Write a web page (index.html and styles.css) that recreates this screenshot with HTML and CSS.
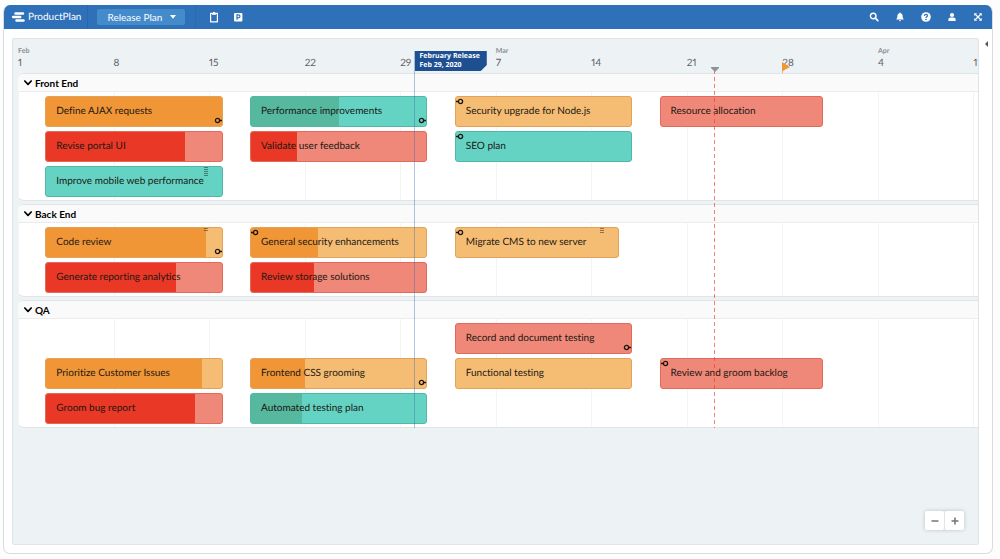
FILE: index.html
```html
<!DOCTYPE html>
<html lang="en">
<head>
<meta charset="utf-8">
<title>ProductPlan – Release Plan</title>
<link rel="stylesheet" href="styles.css">
</head>
<body>
<svg class="sprite" aria-hidden="true">
  <symbol id="link-out" viewBox="0 0 8 7"><circle cx="3.5" cy="3.5" r="2.100" fill="none" stroke="currentColor" stroke-width="1.300"/><path d="M5.600 3.500H8" stroke="currentColor" stroke-width="1.300"/></symbol>
  <symbol id="link-in" viewBox="0 0 8 7"><circle cx="4.5" cy="3.5" r="2.100" fill="none" stroke="currentColor" stroke-width="1.300"/><path d="M0 3.500h2.400" stroke="currentColor" stroke-width="1.300"/></symbol>
  <symbol id="chevron" viewBox="0 0 8 6"><path d="M0.8 1 4 4.4 7.2 1" fill="none" stroke="currentColor" stroke-width="1.7" stroke-linecap="round" stroke-linejoin="round"/></symbol>
</svg>
<div class="app">
  <header class="topbar">
    <a class="brand" href="#">
      <svg class="brand-mark" viewBox="0 0 13 10" aria-hidden="true"><path d="M3.500 1.500h7.500M1.200 5h7M4.500 8.500h7" stroke="#fff" stroke-width="2.500" stroke-linecap="round"/></svg>
      <span>ProductPlan</span>
    </a>
    <div class="plan">
      <div class="plan-picker">
        <select class="plan-select" aria-label="Roadmap"><option>Release Plan</option></select>
        <svg class="plan-caret" viewBox="0 0 6 4" aria-hidden="true"><path d="M0 0h6L3 3.8z" fill="#fff"/></svg>
      </div>
    </div>
    <nav class="tools" aria-label="Boards">
      <button class="icon-btn" aria-label="Table layout"><svg viewBox="0 0 12 12"><path d="M4 2.4H2.6v8.4h6.8V2.4H8" fill="none" stroke="#fff" stroke-width="1.2" stroke-linejoin="round"/><path d="M4 1.8h1a1 1 0 0 1 2 0h1v1.9H4z" fill="#fff"/></svg></button>
      <button class="icon-btn" aria-label="Parking lot"><svg viewBox="0 0 12 12"><rect x="2" y="2" width="8.4" height="8.4" rx="1" fill="#fff"/><path d="M5 8.8V3.9h1.5a1.4 1.4 0 0 1 0 2.900H5" fill="none" stroke="#2e71b9" stroke-width="1.2"/></svg></button>
    </nav>
    <nav class="account" aria-label="Account">
      <button class="icon-btn" aria-label="Search"><svg viewBox="0 0 12 12"><circle cx="5.2" cy="5" r="2.8" fill="none" stroke="#fff" stroke-width="1.4"/><path d="m7.4 7.2 2.4 2.5" stroke="#fff" stroke-width="1.7" stroke-linecap="round"/></svg></button>
      <button class="icon-btn" aria-label="Notifications"><svg viewBox="0 0 12 12"><path d="M6 1.4c.5 0 .7.3.7.8C8 2.600 8.600 3.700 8.600 5c0 1.700.5 2.400 1 3v.6H2.400V8c.5-.6 1-1.300 1-3 0-1.300.6-2.400 1.900-2.800 0-.5.2-.8.7-.8zM4.900 9.200h2.200a1.100 1.100 0 0 1-2.200 0z" fill="#fff"/></svg></button>
      <button class="icon-btn" aria-label="Help"><svg viewBox="0 0 12 12"><circle cx="6" cy="6" r="4.800" fill="#fff"/><path d="M4.500 4.900c0-1 .7-1.500 1.500-1.500s1.500.5 1.500 1.300c0 1-1.500 1-1.500 2.200" fill="none" stroke="#2e71b9" stroke-width="1.200"/><circle cx="6" cy="8.500" r=".8" fill="#2e71b9"/></svg></button>
      <button class="icon-btn" aria-label="Profile"><svg viewBox="0 0 12 12"><circle cx="6" cy="4" r="2.100" fill="#fff"/><path d="M2.400 9.900V8.600c0-1.300 1-2 2.100-2h3c1.100 0 2.100.7 2.100 2v1.300z" fill="#fff"/></svg></button>
      <button class="icon-btn" aria-label="Full screen"><svg viewBox="0 0 12 12"><path d="m3.500 3.500 5 5m0-5-5 5" stroke="#fff" stroke-width="1.200"/><path d="M2.200 2.200h2.900L2.200 5.100zM9.800 2.200v2.900L6.900 2.200zM2.200 9.800V6.900l2.900 2.900zM9.800 9.800H6.900l2.900-2.900z" fill="#fff"/></svg></button>
    </nav>
  </header>

  <div class="workspace">
    <main class="board">
      <div class="timeline">
        <div class="scale track">
          <div class="tick c0"><span class="month">Feb</span><span class="day">1</span></div>
          <div class="tick c1"><span class="day">8</span></div>
          <div class="tick c2"><span class="day">15</span></div>
          <div class="tick c3"><span class="day">22</span></div>
          <div class="tick c4"><span class="day">29</span></div>
          <div class="tick c5"><span class="month">Mar</span><span class="day">7</span></div>
          <div class="tick c6"><span class="day">14</span></div>
          <div class="tick c7"><span class="day">21</span></div>
          <div class="tick c8"><span class="day">28</span></div>
          <div class="tick c9"><span class="month">Apr</span><span class="day">4</span></div>
          <div class="tick c10"><span class="day">11</span></div>
        </div>

        <div class="lanes">
          <section class="lane">
            <h2 class="lane-head"><button class="lane-toggle" aria-expanded="true"><svg class="chev"><use href="#chevron"/></svg>Front End</button></h2>
            <div class="track rows">
              <article class="bar s1 r1 amber"><i class="done" style="width:100%"></i><span class="name">Define AJAX requests</span><svg class="out"><use href="#link-out"/></svg></article>
              <article class="bar s1 r2 red"><i class="done" style="width:79%"></i><span class="name">Revise portal UI</span></article>
              <article class="bar s1 r3 teal"><span class="name">Improve mobile web performance</span><i class="grip grip-lg"></i></article>
              <article class="bar s2 r1 teal"><i class="done" style="width:50%"></i><span class="name">Performance improvements</span><svg class="out"><use href="#link-out"/></svg></article>
              <article class="bar s2 r2 red"><i class="done" style="width:26%"></i><span class="name">Validate user feedback</span></article>
              <article class="bar s3 r1 amber"><span class="name">Security upgrade for Node.js</span><svg class="in"><use href="#link-in"/></svg></article>
              <article class="bar s3 r2 teal"><span class="name">SEO plan</span><svg class="in"><use href="#link-in"/></svg></article>
              <article class="bar s4 r1 red"><span class="name">Resource allocation</span></article>
            </div>
          </section>

          <section class="lane">
            <h2 class="lane-head"><button class="lane-toggle" aria-expanded="true"><svg class="chev"><use href="#chevron"/></svg>Back End</button></h2>
            <div class="track rows">
              <article class="bar s1 r1 amber"><i class="done" style="width:91%"></i><span class="name">Code review</span><i class="grip grip-sm"></i><svg class="out"><use href="#link-out"/></svg></article>
              <article class="bar s1 r2 red"><i class="done" style="width:74%"></i><span class="name">Generate reporting analytics</span></article>
              <article class="bar s2 r1 amber"><i class="done" style="width:38%"></i><span class="name">General security enhancements</span><svg class="in"><use href="#link-in"/></svg></article>
              <article class="bar s2 r2 red"><i class="done" style="width:36%"></i><span class="name">Review storage solutions</span></article>
              <article class="bar s3 short r1 amber"><span class="name">Migrate CMS to new server</span><i class="grip grip-md"></i><svg class="in"><use href="#link-in"/></svg></article>
            </div>
          </section>

          <section class="lane">
            <h2 class="lane-head"><button class="lane-toggle" aria-expanded="true"><svg class="chev"><use href="#chevron"/></svg>QA</button></h2>
            <div class="track rows">
              <article class="bar s3 r1 red"><span class="name">Record and document testing</span><svg class="out"><use href="#link-out"/></svg></article>
              <article class="bar s1 r2 amber"><i class="done" style="width:89%"></i><span class="name">Prioritize Customer Issues</span></article>
              <article class="bar s1 r3 red"><i class="done" style="width:85%"></i><span class="name">Groom bug report</span></article>
              <article class="bar s2 r2 amber"><i class="done" style="width:31%"></i><span class="name">Frontend CSS grooming</span><svg class="out"><use href="#link-out"/></svg></article>
              <article class="bar s2 r3 teal"><i class="done" style="width:29%"></i><span class="name">Automated testing plan</span></article>
              <article class="bar s3 r2 amber"><span class="name">Functional testing</span></article>
              <article class="bar s4 r2 red"><span class="name">Review and groom backlog</span><svg class="in"><use href="#link-in"/></svg></article>
            </div>
          </section>
        </div>

        <div class="milestone" style="left:41.2%"><div class="milestone-flag">February Release<br>Feb 29, 2020</div></div>
        <div class="today" style="left:72.5%"><svg class="today-mark" viewBox="0 0 8 5" aria-hidden="true"><path d="M0 0h8v1L4 5 0 1z" fill="#8e9398"/></svg></div>
        <svg class="flag" style="left:79.6%" viewBox="0 0 8 11" aria-hidden="true"><path d="M0 0l8 5-7.300 4V11H0z" fill="#f09637"/></svg>
      </div>

      <div class="zoom">
        <button class="zoom-btn" aria-label="Zoom out"><svg viewBox="0 0 8 8"><path d="M.5 4h7" stroke="#73777b" stroke-width="1.600"/></svg></button>
        <button class="zoom-btn" aria-label="Zoom in"><svg viewBox="0 0 8 8"><path d="M.5 4h7M4 .5v7" stroke="#73777b" stroke-width="1.600"/></svg></button>
      </div>
    </main>
    <button class="drawer" aria-label="Open side panel"><svg viewBox="0 0 3 6"><path d="M3 0v6L0 3z" fill="#55595d"/></svg></button>
  </div>
</div>
</body>
</html>
```
FILE: styles.css
```css
* { box-sizing: border-box; }

body {
  margin: 0;
  min-height: 100vh;
  padding: 5px 7px 5px 3px;
  display: flex;
  background: #fdfdfd;
  color: #1b1b1b;
  font: 10px/12px Lato, "Noto Sans", sans-serif;
  font-variant-ligatures: none;
  text-rendering: geometricPrecision;
}

button {
  margin: 0;
  padding: 0;
  border: 0;
  background: none;
  color: inherit;
  font: inherit;
}

svg { display: block; }
.sprite { position: absolute; width: 0; height: 0; }

.app {
  flex: 1;
  min-width: 0;
  display: flex;
  flex-direction: column;
  border: 1px solid #d9dcdf;
  border-top: 0;
  border-radius: 7px;
  background: #fff;
  overflow: hidden;
}

/* top bar */
.topbar {
  display: flex;
  align-items: stretch;
  height: 24px;
  background: #2e71b9;
  color: #fff;
}
.brand {
  display: flex;
  align-items: center;
  gap: 3px;
  padding: 0 6px 0 8px;
  border-right: 1px solid #2767ad;
  color: #fff;
  text-decoration: none;
}
.brand-mark { width: 13px; height: 10px; }
.plan {
  display: flex;
  align-items: center;
  padding: 0 10px 0 9px;
  border-right: 1px solid #2a6ab0;
}
.plan-picker { position: relative; }
.plan-select {
  appearance: none;
  width: 88px;
  height: 16px;
  padding: 0 20px 0 10px;
  border: 0;
  border-radius: 2px;
  background: #448bcb;
  color: #fff;
  font: inherit;
}
.plan-caret {
  position: absolute;
  right: 9px;
  top: 6px;
  width: 6px;
  height: 4px;
  pointer-events: none;
}
.tools, .account { display: flex; align-items: center; }
.tools { gap: 12px; padding-left: 12px; }
.account { gap: 14px; margin-left: auto; padding-right: 8px; }
.icon-btn, .icon-btn svg { width: 12px; height: 12px; }

/* workspace */
.workspace {
  flex: 1;
  display: flex;
  align-items: stretch;
  padding: 9px 0 8px 8px;
}
.board {
  position: relative;
  flex: 1;
  min-width: 0;
  padding-left: 5px;
  border: 1px solid #dfe4e7;
  border-radius: 2px;
  background: #edf2f5;
  overflow: hidden;
}
.drawer { align-self: flex-start; width: 13px; padding: 3px 0 0 6px; }
.drawer svg { width: 3px; height: 6px; }

/* timeline: three columns per day, 21 per week */
.timeline { position: relative; }
.track {
  display: grid;
  grid-template-columns: repeat(211, minmax(0, 1fr));
}
.scale { height: 34px; padding-top: 7px; }
.tick {
  grid-row: 1;
  display: flex;
  flex-direction: column;
  justify-content: flex-end;
  white-space: nowrap;
  height: 24px;
}
.c0 { grid-column: 1; }
.c1 { grid-column: 22; }
.c2 { grid-column: 43; }
.c3 { grid-column: 64; }
.c4 { grid-column: 85; }
.c5 { grid-column: 106; }
.c6 { grid-column: 127; }
.c7 { grid-column: 148; }
.c8 { grid-column: 169; }
.c9 { grid-column: 190; }
.c10 { grid-column: 211; }
.month { color: #8b9094; font-size: 7px; line-height: 10px; font-weight: 700; }
.day { color: #5d6165; font-size: 10px; line-height: 14px; font-variant-numeric: proportional-nums; }

.lanes { display: flex; flex-direction: column; gap: 3px; }
.lane {
  border: 1px solid #e0e4e7;
  border-right: 0;
  border-left-width: 0;
  border-radius: 6px 0 0 6px;
  background: #fff;
  overflow: hidden;
}
.lane-head {
  margin: 0;
  height: 18px;
  border-bottom: 1px solid #eaecee;
  background: #fafafa;
  font-size: 10px;
  line-height: 17px;
}
.lane-toggle { display: flex; align-items: center; gap: 3px; height: 17px; padding: 1px 0 0 6px; color: #000; font-weight: 700; }
.chev { width: 8px; height: 6px; }

.rows {
  grid-auto-rows: 31px;
  row-gap: 4px;
  padding: 4px 0 3px;
  background: repeating-linear-gradient(to right, #f2f4f5 0 1px, transparent 1px calc(100% * 21 / 211));
}
.bar {
  position: relative;
  display: flex;
  align-items: center;
  padding: 0 10px 2px;
  border: 1px solid;
  border-radius: 3px;
  overflow: hidden;
  color: #1c1713;
}
.s1 { grid-column: 7 / 46; }
.s2 { grid-column: 52 / 91; }
.s3 { grid-column: 97 / 136; }
.s3.short { grid-column: 97 / 133; }
.s4 { grid-column: 142 / 178; }
.r1 { grid-row: 1; }
.r2 { grid-row: 2; }
.r3 { grid-row: 3; }
.amber { background: #f5bd74; border-color: #e2a257; --done: #f09637; }
.red { background: #ef8878; border-color: #e26a5b; --done: #ea3826; }
.teal { background: #65d3c3; border-color: #50b9a4; --done: #55b89f; }
.done { position: absolute; inset: 0 auto 0 0; background: var(--done); }
.name { position: relative; white-space: nowrap; }
.out, .in { position: absolute; width: 8px; height: 7px; color: #1c1713; }
.out { right: 0; bottom: 2px; }
.in { left: 0; top: 1px; }
.grip {
  position: absolute;
  top: 0;
  right: 14px;
  width: 4px;
  background: repeating-linear-gradient(#0006 0 1px, transparent 1px 2px);
}
.grip-lg { height: 9px; }
.grip-md { height: 5px; }
.grip-sm { height: 3px; }

/* markers over the timeline */
.milestone {
  position: absolute;
  top: 12px;
  bottom: 0;
  border-left: 1px solid #3a6ca866;
  pointer-events: none;
}
.milestone-flag {
  padding: 1px 7px 1px 5px;
  background: #1d4f91;
  color: #fff;
  font-family: "Open Sans", "Noto Sans", sans-serif;
  font-size: 7px;
  line-height: 9px;
  font-weight: 700;
  white-space: nowrap;
  clip-path: polygon(0 0, 100% 0, 100% calc(100% - 6px), calc(100% - 6px) 100%, 0 100%);
}
.today {
  position: absolute;
  top: 28px;
  bottom: 0;
  width: 1px;
  background: repeating-linear-gradient(transparent 0 3px, #ea3826a0 3px 7px);
  pointer-events: none;
}
.today-mark { position: absolute; left: -3px; top: 0; width: 8px; height: 5px; }
.flag { position: absolute; top: 23px; width: 8px; height: 11px; }

.zoom {
  position: absolute;
  right: 14px;
  bottom: 14px;
  display: flex;
  gap: 1px;
  border-radius: 2px;
  background: #dfe4e7;
  box-shadow: 0 0 4px #0003;
}
.zoom-btn {
  display: grid;
  place-items: center;
  width: 19px;
  height: 19px;
  border-radius: 2px;
  background: #fff;
}
.zoom-btn svg { width: 8px; height: 8px; }
```
